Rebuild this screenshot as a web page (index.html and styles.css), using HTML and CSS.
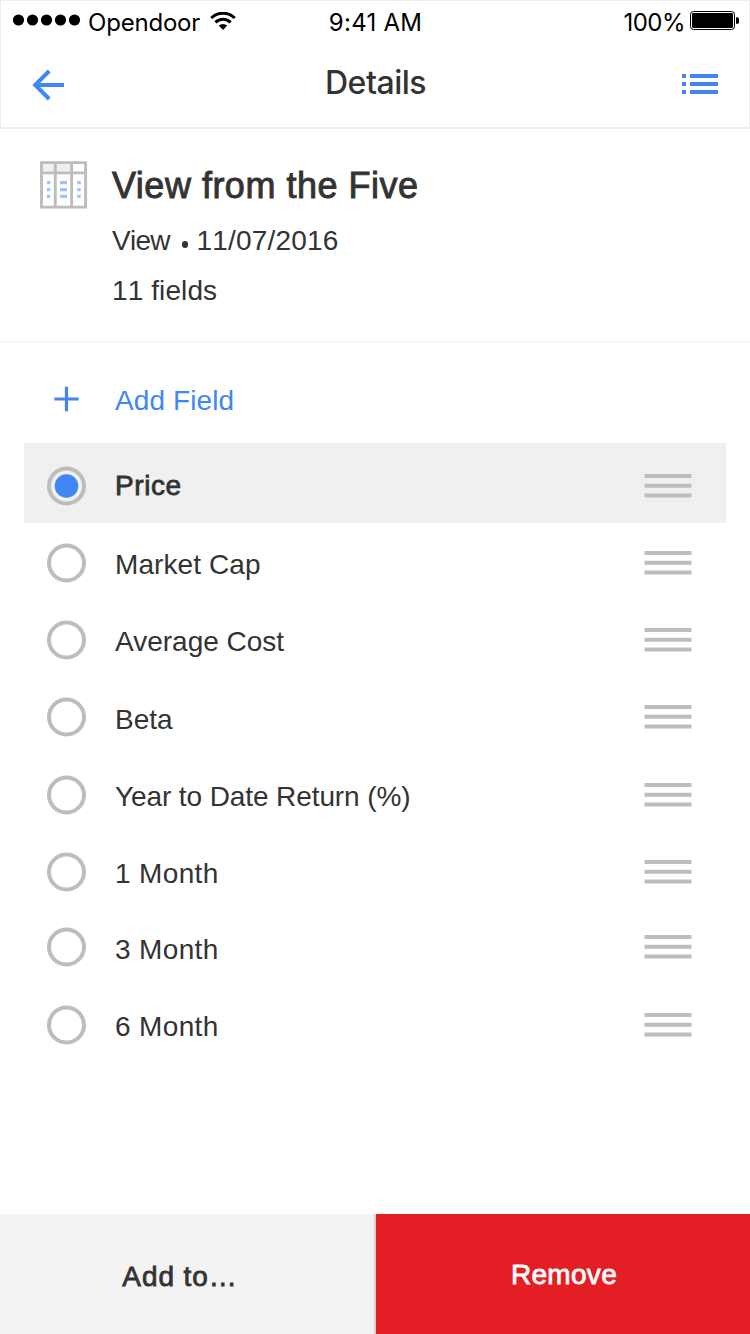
FILE: index.html
```html
<!DOCTYPE html>
<html lang="en">
<head>
<meta charset="utf-8">
<title>Details</title>
<link rel="stylesheet" href="styles.css">
</head>
<body>
<svg class="defs" aria-hidden="true">
  <symbol id="radio" viewBox="0 0 40 40"><circle cx="20.5" cy="20" r="17.5" fill="none" stroke="#bdbdbd" stroke-width="4"/></symbol>
  <symbol id="radio-on" viewBox="0 0 40 40"><circle cx="20.5" cy="20" r="17.5" fill="none" stroke="#bdbdbd" stroke-width="4"/><circle cx="20.5" cy="20" r="11.8" fill="#4285f4"/></symbol>
  <symbol id="handle" viewBox="0 0 48 24"><path d="M.5 2H47.5M.5 11.8H47.5M.5 21.6H47.5" stroke="#bdbdbd" stroke-width="4"/></symbol>
</svg>
<div class="screen">
  <header class="header">
    <div class="status">
      <div class="status-left">
        <svg class="signal" width="68" height="12" viewBox="0 0 68 12"><circle cx="5.5" cy="6" r="5.6"/><circle cx="19.5" cy="6" r="5.6"/><circle cx="33.5" cy="6" r="5.6"/><circle cx="47.5" cy="6" r="5.6"/><circle cx="61.5" cy="6" r="5.6"/></svg>
        <span class="carrier">Opendoor</span>
        <svg class="wifi" width="26" height="18" viewBox="0 0 26 18"><path d="M1.2 6A16.8 16.8 0 0 1 24.8 6M5.4 10.4A10.8 10.8 0 0 1 20.6 10.4" fill="none" stroke="#000" stroke-width="3"/><path d="M8.8 13.6A6.4 6.4 0 0 1 17.2 13.6L13 17.9Z"/></svg>
      </div>
      <span class="time">9:41 AM</span>
      <div class="status-right">
        <span class="percent">100%</span>
        <svg class="battery" width="50" height="20" viewBox="0 0 50 20"><rect x=".5" y=".5" width="44" height="18" rx="3" fill="none" stroke="#000"/><rect x="2" y="2" width="41" height="15" rx="1.2"/><path d="M46 6.2h1.2q1.8 0 1.8 1.6v3.4q0 1.6-1.8 1.6H46z"/></svg>
      </div>
    </div>
    <nav class="nav">
      <svg class="back" width="34" height="34" viewBox="0 0 34 34"><path d="M33 17H3M18.2 3 4.2 17l14 14" fill="none" stroke="#4285f4" stroke-width="4"/></svg>
      <h1 class="nav-title">Details</h1>
      <svg class="list-icon" width="36" height="20" viewBox="0 0 36 20"><path d="M0 2H4M8 2H36M0 10H4M8 10H36M0 18H4M8 18H36" stroke="#4285f4" stroke-width="4"/></svg>
    </nav>
  </header>

  <section class="summary">
    <svg class="table-icon" width="48" height="48" viewBox="0 0 48 48">
      <path d="M2 2H15V11H2zM16 2H31V11H16z" fill="#f0f0f0"/>
      <path d="M1.5 1.6H45.6V46.1H1.5zM15.3 1V46M31.6 1V46M1 11.9H46" fill="none" stroke="#bdbdbd" stroke-width="2.9"/>
      <path d="M6.9 21.7h3.4M20 21.7h7M37.3 21.7h3.4M6.9 28.6h3.4M20 28.6h7M37.3 28.6h3.4M6.9 35.4h3.4M20 35.4h7M37.3 35.4h3.4" stroke="#a0c2fa" stroke-width="3.3"/>
    </svg>
    <div class="summary-text">
      <h2 class="title">View from the Five</h2>
      <p class="meta"><span class="kind">View</span><i class="dot"></i><span class="date">11/07/2016</span></p>
      <p class="meta count">11 fields</p>
    </div>
  </section>

  <main class="fields">
    <div class="row add"><svg class="plus" width="40" height="40" viewBox="0 0 40 40"><path d="M8.3 20H32.7M20.5 7.8V32.2" stroke="#4285f4" stroke-width="3.2"/></svg><span class="label l-add">Add Field</span></div>
    <div class="row selected"><svg class="radio"><use href="#radio-on"/></svg><span class="label l-price">Price</span><svg class="handle"><use href="#handle"/></svg></div>
    <div class="row first"><svg class="radio"><use href="#radio"/></svg><span class="label l-cap">Market Cap</span><svg class="handle"><use href="#handle"/></svg></div>
    <div class="row"><svg class="radio"><use href="#radio"/></svg><span class="label l-cost">Average Cost</span><svg class="handle"><use href="#handle"/></svg></div>
    <div class="row"><svg class="radio"><use href="#radio"/></svg><span class="label l-beta">Beta</span><svg class="handle"><use href="#handle"/></svg></div>
    <div class="row"><svg class="radio"><use href="#radio"/></svg><span class="label l-year">Year to Date Return (%)</span><svg class="handle"><use href="#handle"/></svg></div>
    <div class="row"><svg class="radio"><use href="#radio"/></svg><span class="label l-month">1 Month</span><svg class="handle"><use href="#handle"/></svg></div>
    <div class="row tight"><svg class="radio"><use href="#radio"/></svg><span class="label l-month">3 Month</span><svg class="handle"><use href="#handle"/></svg></div>
    <div class="row"><svg class="radio"><use href="#radio"/></svg><span class="label l-month">6 Month</span><svg class="handle"><use href="#handle"/></svg></div>
  </main>

  <footer class="actions">
    <div class="action add-to">Add to…</div>
    <div class="action remove">Remove</div>
  </footer>
</div>
</body>
</html>
```
FILE: styles.css
```css
* { box-sizing: border-box; }
body { margin: 0; background: #fff; }
h1, h2, p { margin: 0; font-weight: 400; }
svg { display: block; flex: none; }
.defs { position: absolute; width: 0; height: 0; }

.screen {
  width: 750px;
  height: 1334px;
  display: flex;
  flex-direction: column;
  overflow: hidden;
  background: #fff;
  color: #333;
  font-family: "Liberation Sans", Arial, sans-serif;
}

/* Status bar and navigation */
.header {
  height: 129px;
  flex: none;
  border: 1px solid #eee;
  border-bottom-width: 2px;
  font-family: Inter, sans-serif;
}
.status {
  height: 40px;
  display: grid;
  grid-template-columns: 1fr auto 1fr;
  padding: 0 9px 0 12px;
  color: #000;
  font-size: 24px;
  line-height: 44px;
}
.status-left, .status-right { display: flex; align-items: flex-start; }
.status-right { justify-content: flex-end; }
.signal { margin-top: 13px; }
.carrier { margin-left: 7px; width: 114px; letter-spacing: -.2px; }
.time { letter-spacing: .25px; margin-left: -2px; }
.percent { letter-spacing: -.5px; }
.wifi { margin: 11px 0 0 8px; }
.battery { margin: 10px 0 0 5px; }
.nav {
  height: 86px;
  display: grid;
  grid-template-columns: 1fr auto 1fr;
  padding: 0 31px 0 30px;
}
.back { margin-top: 27px; }
.nav-title { font-size: 32px; line-height: 40px; font-weight: 500; margin: 22px -1px 0 1px; letter-spacing: -.5px; }
.list-icon { margin-top: 33px; justify-self: end; }

/* Summary */
.summary {
  height: 214px;
  flex: none;
  display: flex;
  padding: 32px 40px 0;
  border-bottom: 2px solid #f8f8f8;
}
.summary-text { margin-left: 24px; padding-top: 1px; }
.title {
  font-size: 36px;
  line-height: 48px;
  letter-spacing: .5px;
  -webkit-text-stroke: .9px currentColor;
}
.meta { display: flex; height: 50px; font-size: 28px; line-height: 62px; font-kerning: none; }
.kind { letter-spacing: -.7px; }
.count { letter-spacing: .1px; }
.date { letter-spacing: .2px; }
.dot { width: 6.5px; height: 6.5px; border-radius: 50%; background: #333; margin: 31px 8px 0 12px; }

/* Field list */
.fields { flex: 1; padding: 0 24px; }
.row { height: 77.25px; display: flex; align-items: center; font-size: 28px; }
.label { flex: 1; margin-left: 29px; padding-top: 5px; line-height: 32px; white-space: nowrap; }
.radio, .plus { width: 40px; height: 40px; margin-left: 22px; }
.handle { width: 48px; height: 24px; margin-right: 34px; }
.add { height: 100px; padding-top: 11px; color: #4285f4; }
.selected { height: 80px; padding-top: 5px; background: #f0f0f0; }
.selected .label { padding-top: 0; letter-spacing: .6px; -webkit-text-stroke: .8px currentColor; }
.first { margin-top: 1.2px; }
.tight { margin-top: -1.75px; }
.l-add, .l-cap { letter-spacing: .1px; }
.l-cost { padding-top: 3px; }
.l-year { letter-spacing: -.1px; }
.l-month { letter-spacing: .35px; }

/* Bottom actions */
.actions { height: 120px; flex: none; display: flex; font-size: 28px; line-height: 126px; text-align: center; }
.action { -webkit-text-stroke: .8px currentColor; letter-spacing: .3px; }
.add-to { width: 376px; padding-right: 14px; background: #f3f3f3; border-right: 2px solid #d4d4d4; letter-spacing: .9px; }
.remove { flex: 1; background: #e41e25; color: #fff; line-height: 122px; padding-left: 2px; }
```
